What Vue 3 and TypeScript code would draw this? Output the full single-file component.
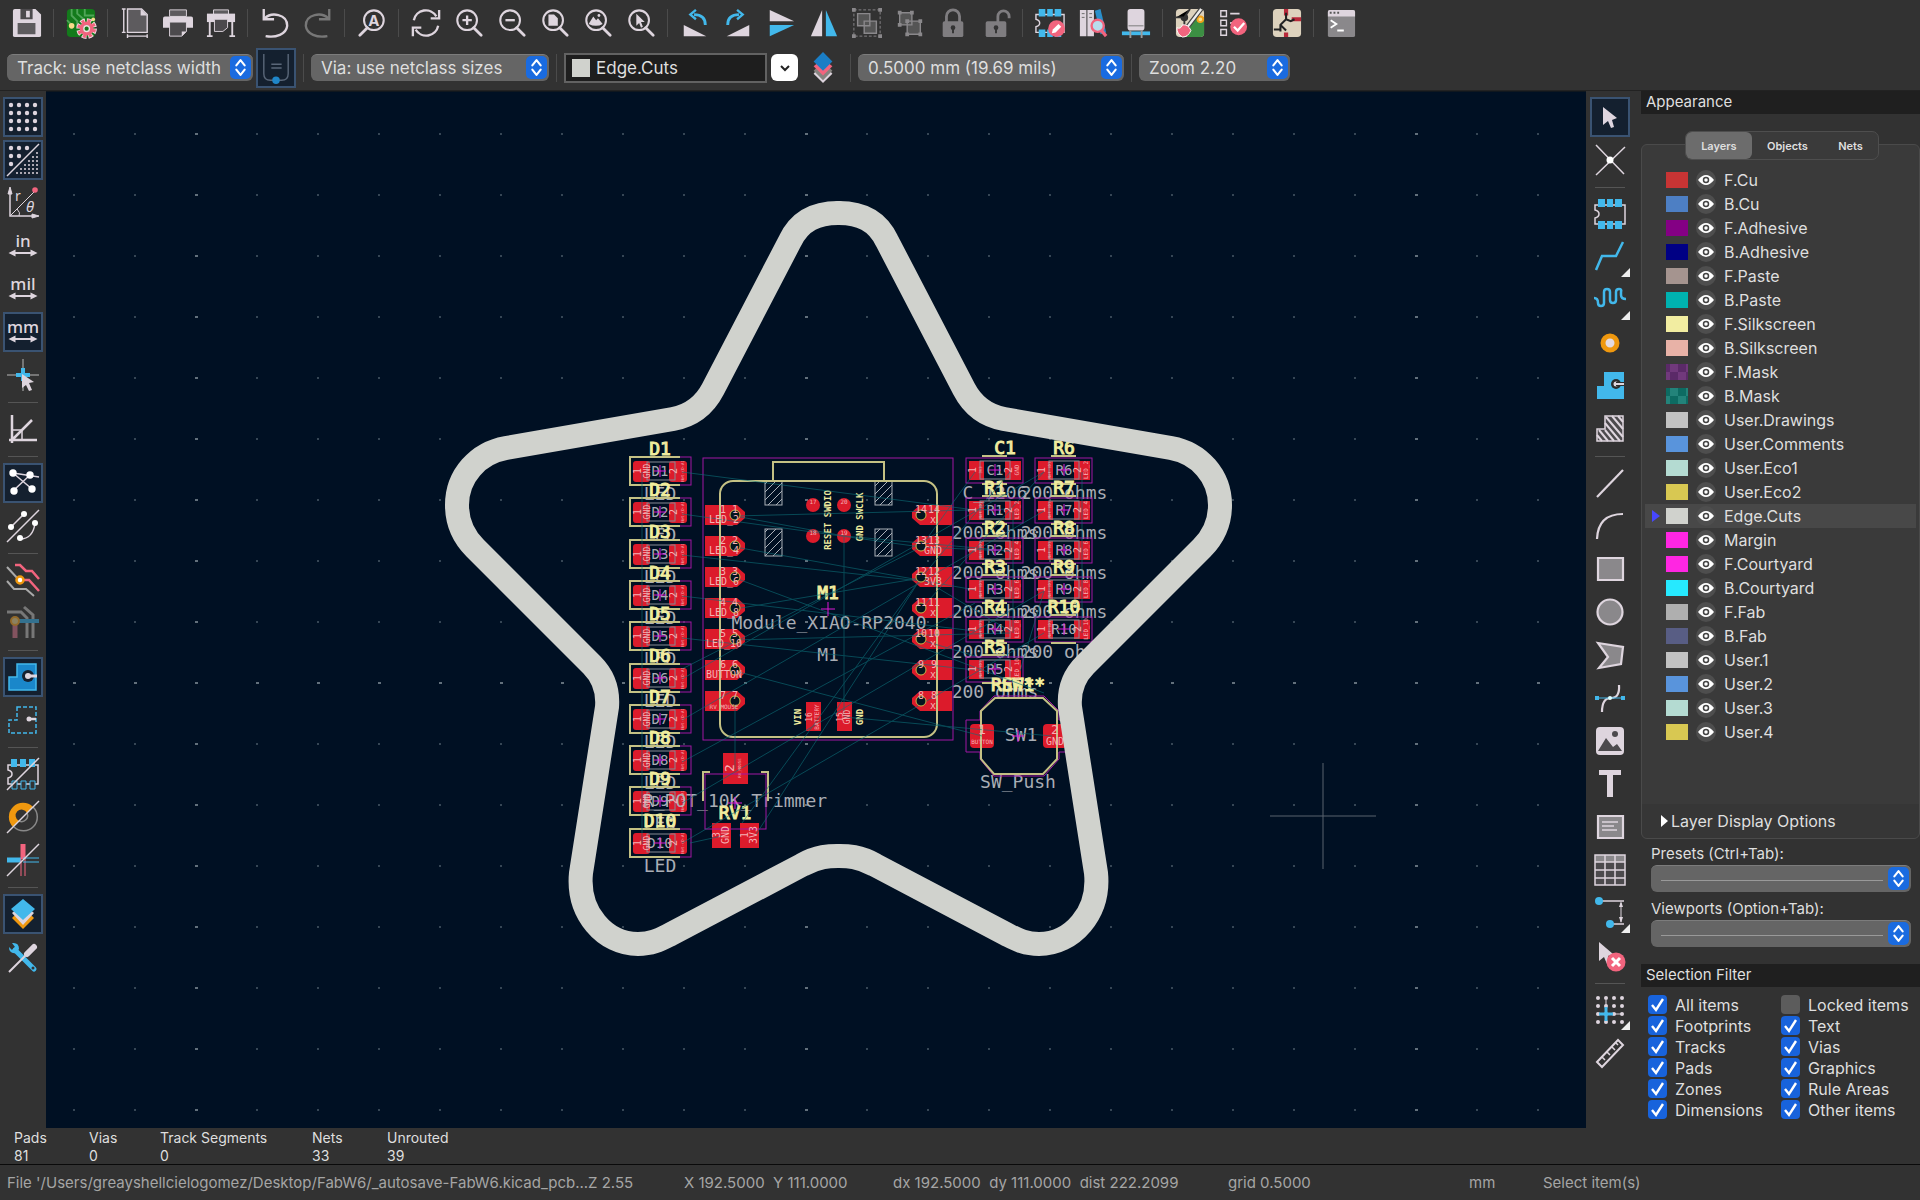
<script setup lang="ts">
import { ref } from 'vue'

interface Tool { id: string; label: string; on?: boolean; off?: boolean; more?: boolean }
type Item = Tool | null

const W = '#ded5de'
const B = '#42b8eb'
const P = '#f2647e'
const G = '#8a888b'

const lens = (inner: string) =>
  `<circle cx="14" cy="13" r="10.5" fill="none" stroke="${W}" stroke-width="2.2"/><path d="M21 21l8 8" stroke="${W}" stroke-width="3" stroke-linecap="round"/>${inner}`
const arrows = `<path d="M5 23h22" stroke="${W}" stroke-width="2"/><path d="M1.500 23l7-3.500v7zM30.500 23l-7-3.500v7z" fill="${W}"/>`
const unit = (t: string) => `<text x="16" y="17" text-anchor="middle" font-family="Noto Sans, sans-serif" font-weight="500" font-size="17" fill="${W}">${t}</text>${arrows}`
const range = (n: number) => Array.from({ length: n }, (_, i) => i)
const dots = (xs: number[], ys: number[], r: number) =>
  ys.map(y => xs.map(x => `<circle cx="${x}" cy="${y}" r="${r}" fill="${W}"/>`).join('')).join('')
const chip = `<path d="M1 7h30v19H1v-6q4-1 4-4t-4-4z" fill="none" stroke="${W}" stroke-width="1.500"/>`
const chipPads = `<path d="M4 1h7v8H4zM13 1h6v8h-6zM21 1h7v8h-7zM4 23h7v8H4zM13 23h6v8h-6zM21 23h7v8h-7z" fill="${B}"/>`
const lock = (d: string) => `<rect x="5" y="14" width="22" height="17" rx="2" fill="#7f7d80"/><path d="${d}" fill="none" stroke="#7f7d80" stroke-width="3"/><circle cx="16" cy="21" r="2.500" fill="#333"/><path d="M16 21v6" stroke="#333" stroke-width="2"/>`

const icons: Record<string, string> = {
  save: `<path d="M1 3q0-2 2-2h22l6 6v22q0 2-2 2H3q-2 0-2-2z" fill="${W}"/><path d="M9 1h13v11H9z" fill="#4c4a4d"/><path d="M15 3h4v7h-4z" fill="${W}"/><path d="M6 16h19v12H6z" fill="#5d5b5e"/>`,
  setup: `<rect x="1" y="1" width="30" height="30" rx="4" fill="#137a1b"/><path d="M6 1v7l6 6v6M12 1v5l7 6M20 1v7h10M1 13l5 5" stroke="#4fa457" stroke-width="2" fill="none"/><circle cx="6" cy="19" r="3" fill="#f6dc8a"/><circle cx="29" cy="12" r="2" fill="#f6dc8a"/><circle cx="22" cy="22" r="8" fill="none" stroke="#f3dfe3" stroke-width="6" stroke-dasharray="4.500 1.780"/><circle cx="22" cy="22" r="8" fill="none" stroke="${P}" stroke-width="4" stroke-dasharray="3 3.280" stroke-dashoffset="-.7"/><circle cx="22" cy="22" r="5.500" fill="none" stroke="${P}" stroke-width="4"/><circle cx="22" cy="22" r="3" fill="#137a1b" stroke="#f3dfe3" stroke-width="1.500"/>`,
  page: `<path d="M8 1h15l6 6v19H8z" fill="#5d5b5e" stroke="${W}" stroke-width="1.500"/><path d="M22 1v7h7z" fill="${W}"/><path d="M4 1v25M2 1h4M2 26h4M8 30h21M8 28v4M29 28v4" stroke="${W}" stroke-width="1.500"/>`,
  print: `<path d="M7 2h18v7H7z" fill="#5d5b5e" stroke="${W}"/><path d="M2 9h28q2 0 2 2v10H0V11q0-2 2-2z" fill="${W}"/><path d="M7 15h18v10l-5 5H7z" fill="#4c4a4d" stroke="${W}"/><path d="M25 25h-5v5z" fill="${W}"/>`,
  plot: `<path d="M8 2h16v5H8z" fill="#5d5b5e" stroke="${W}"/><path d="M1 6h30v9H1z" fill="${W}"/><path d="M9 12h14v9l-5 4H9z" fill="#4c4a4d" stroke="${W}"/><path d="M4 15v14M28 15v14M1 30h6M25 30h6" stroke="${W}" stroke-width="2"/>`,
  undo: `<path d="M5 11C12 4 29 6 29 19C28 28 17 32 6 30" fill="none" stroke="${W}" stroke-width="2.500"/><path d="M4 1v11h11" fill="none" stroke="${W}" stroke-width="2.500"/>`,
  redo: `<path d="M27 11C20 4 3 6 3 19C4 28 15 32 26 30" fill="none" stroke="#777" stroke-width="2.500"/><path d="M28 1v11H17" fill="none" stroke="#777" stroke-width="2.500"/>`,
  find: `<circle cx="18" cy="13" r="10.500" fill="none" stroke="${W}" stroke-width="2.200"/><path d="M11 21l-8 8" stroke="${W}" stroke-width="3" stroke-linecap="round"/><text x="18" y="19" text-anchor="middle" font-family="Inter, sans-serif" font-weight="700" font-size="16" fill="${W}">A</text>`,
  refresh: `<path d="M3 13A13 13 0 0 1 27 9M29 19A13 13 0 0 1 5 23" fill="none" stroke="${W}" stroke-width="2.500"/><path d="M30 2v9h-9M2 30v-9h9" fill="none" stroke="${W}" stroke-width="2.500"/>`,
  zoomin: lens(`<path d="M14 8v10M9 13h10" stroke="${W}" stroke-width="2.500"/>`),
  zoomout: lens(`<path d="M9 13h10" stroke="${W}" stroke-width="2.500"/>`),
  zoompage: lens(`<path d="M9 7h6l4 4v8H9z" fill="${W}"/>`),
  zoomobj: lens(`<path d="M6 17l5-8 3 4 2-2 5 6q-7 4-15 0z" fill="${W}"/><circle cx="17" cy="8" r="1.500" fill="${W}"/>`),
  zoomsel: lens(`<path d="M11 6v13l3-3 2 5 2-1-2-5h4z" fill="${W}"/>`),
  rotl: `<path d="M4 18v12h24z" fill="${W}"/><path d="M27 18q0-11-12-11" fill="none" stroke="${B}" stroke-width="3"/><path d="M17 2l-6 5 6 5" fill="none" stroke="${B}" stroke-width="2.500"/>`,
  rotr: `<path d="M28 18v12H4z" fill="${W}"/><path d="M5 18Q5 7 17 7" fill="none" stroke="${B}" stroke-width="3"/><path d="M15 2l6 5-6 5" fill="none" stroke="${B}" stroke-width="2.500"/>`,
  mirv: `<path d="M4 2v12h26z" fill="${W}"/><path d="M4 30V18h26z" fill="${B}"/>`,
  mirh: `<path d="M14 2v28H2z" fill="${W}"/><path d="M18 2v28h12z" fill="${B}"/>`,
  group: `<rect x="2" y="2" width="28" height="28" fill="none" stroke="${G}" stroke-dasharray="3 2"/><path d="M0 0h4v4H0zM28 0h4v4h-4zM0 28h4v4H0zM28 28h4v4h-4z" fill="${G}"/><path d="M6 6h13v13H6zM13 14h13v13H13z" fill="#555" stroke="${G}" stroke-width="1.500"/>`,
  ungroup: `<path d="M5 5h13v13H5zM13 14h14v14H13z" fill="#555" stroke="${G}" stroke-width="1.500"/><path d="M3 3h4v4H3zM16 3h4v4h-4zM3 16h4v4H3zM11 12h4v4h-4zM25 12h4v4h-4zM11 26h4v4h-4zM25 26h4v4h-4z" fill="${G}"/>`,
  lock: lock('M9 15V9a7 7 0 0 1 14 0v6'),
  unlock: lock('M18 15V9a6 6 0 0 1 12 0v2'),
  fpedit: `${chip}${chipPads}<circle cx="23" cy="22" r="9" fill="${P}"/><path d="M18 27l1-4 6-6 3 3-6 6z" fill="#fff"/>`,
  lib: `<path d="M2 2h7v28H2zM10 2h7v28h-7z" fill="${W}"/><path d="M18 3l6-2 6 25-6 2z" fill="#2a8fca"/><path d="M4 6h3M12 6h3M4 10h3M12 10h3" stroke="#666"/><circle cx="21" cy="19" r="6.500" fill="#b9dced" stroke="${P}" stroke-width="2.500"/><path d="M25 24l5 6" stroke="${P}" stroke-width="3.500"/>`,
  view3d: `<rect x="7" y="1" width="18" height="23" rx="3" fill="${W}"/><path d="M8 19h16" stroke="#777"/><path d="M1 25h30v4H1z" fill="${B}"/><path d="M10 24v8M22 24v8" stroke="#999" stroke-width="2"/>`,
  update: `<rect x="1" y="1" width="30" height="30" rx="4" fill="#ddd2bd"/><path d="M20 10h11v17q0 4-4 4H12z" fill="#3c8f43"/><circle cx="10" cy="10" r="4" fill="#333"/><path d="M1 10h9l6-9M10 10v8" stroke="#333" stroke-width="2"/><circle cx="27" cy="12" r="3" fill="#f5e08a" stroke="#f3a21b" stroke-width="2"/><path d="M28 1L12 22" stroke="#444" stroke-width="5"/><path d="M28 1L12 22" stroke="#eee" stroke-width="2.500"/><path d="M2 21q4 2 6-3 6-1 9 6-3 7-9 7-6-3-6-10z" fill="${P}" stroke="#fff"/>`,
  drc: `<path d="M3 3h6v6H3zM3 13h6v6H3zM3 23h6v6H3z" fill="none" stroke="${W}" stroke-width="1.500"/><path d="M13 6h10M13 16h6" stroke="${W}" stroke-width="2"/><circle cx="22" cy="20" r="9" fill="${P}"/><path d="M17 20l4 4 7-8" fill="none" stroke="#fff" stroke-width="2.500"/>`,
  schem: `<rect x="1" y="1" width="30" height="30" rx="4" fill="#ddd2bd"/><path d="M15 1v7M21 12h10M15 26v5" stroke="#b8283a" stroke-width="4.500"/><path d="M15 5v7l5 2 4-2M15 12l-6 6v7M2 23h8M9 18l6 6" stroke="#222" stroke-width="2.200" fill="none"/>`,
  console: `<rect x="2" y="2" width="29" height="29" rx="2" fill="${G}"/><path d="M2 9h29V4q0-2-2-2H4Q2 2 2 4z" fill="${W}"/><path d="M4 5h2M8 5h2M12 5h2" stroke="#555" stroke-width="2"/><path d="M5 13l6 4-6 4M12 24h7" fill="none" stroke="#fff" stroke-width="2"/>`,
  trackw: `<path d="M3 1v21q0 7 7 7h12q7 0 7-7V1M11 12h11M11 16h11" fill="none" stroke="#5a6779" stroke-width="1.500"/><circle cx="16" cy="29" r="4" fill="#1f86c9"/>`,
  layers: `<path d="M16 10L6 22l10 10 10-10z" fill="${W}"/><path d="M16 9L6 19l10 10 10-10z" fill="#85837f"/><path d="M16 6L6 14l10 10 10-10z" fill="${P}"/><path d="M16-1L6 9l10 10L26 9z" fill="#1a7ec6"/>`,
  grid: dots([4, 12, 20, 28], [4, 12, 20, 28], 2.2),
  gridov: `${dots([4, 12, 20], [4], 2.2)}${dots([4, 12], [12], 2.2)}${dots([4], [20], 2.2)}<path d="M0 32L32 0" stroke="${W}" stroke-width="1.500"/>` +
    range(6).map(r => dots(range(r + 1).map(i => 30 - i * 4), [9 + r * 4], 1)).join(''),
  polar: `<path d="M3 4v25h26" fill="none" stroke="${W}" stroke-width="1.500"/><path d="M3 0l-2 7h4zM32 29l-7-2v4zM3 29L28 4" fill="${W}" stroke="${W}"/><path d="M10 22q4 4 2 7" fill="none" stroke="${W}"/><circle cx="28" cy="3" r="2.800" fill="${P}"/><text x="8" y="14" font-family="Noto Sans, sans-serif" font-size="14" fill="${W}">r</text><text x="19" y="25" font-family="Noto Sans, sans-serif" font-style="italic" font-size="15" fill="${W}">θ</text>`,
  inch: unit('in'), mil: unit('mil'), mm: unit('mm'),
  cross: `<path d="M16 0v32M0 16h32" stroke="#8c8c8c" stroke-width="1.500"/><path d="M16 9v13M9 16h14" stroke="${B}" stroke-width="4"/><path d="M15 15v14l4-3 3 6 3-1-3-7 5-1z" fill="${W}"/>`,
  angle: `<path d="M5 2v28M2 27h28M4 28L25 7" stroke="${W}" stroke-width="2.500"/><path d="M5 17h10v9" fill="none" stroke="${W}" stroke-width="1.500"/>`,
  rats: `<path d="M6 6l26 4M7 23L23 8M6 6l19 16" stroke="${W}" stroke-width="1.500"/><circle cx="6" cy="6" r="3.700" fill="#fff"/><circle cx="23" cy="8" r="3.700" fill="#fff"/><circle cx="7" cy="24" r="3.700" fill="#fff"/><circle cx="25" cy="22" r="3.700" fill="#fff"/>`,
  ratscurve: `<path d="M0 32L32 0M4 17L17 4M13 29q13 0 15-16" fill="none" stroke="${W}" stroke-width="1.500"/><circle cx="4" cy="17" r="3" fill="#fff"/><circle cx="17" cy="4" r="3" fill="#fff"/><circle cx="28" cy="13" r="3" fill="#fff"/><circle cx="13" cy="28" r="3" fill="#fff"/>`,
  netclr: `<path d="M0 3l12 13M0 17l7 8h12l8 7" fill="none" stroke="#aaa" stroke-width="2"/><path d="M8 1h5l6 6h6l7 8M13 16h9l10 11" fill="none" stroke="${P}" stroke-width="2.500"/><circle cx="13" cy="16" r="3.500" fill="#fff" stroke="#ef980f" stroke-width="2.500"/>`,
  contrast: `<path d="M0 5h14l6 6v20M17 0l9 8v23" fill="none" stroke="#777" stroke-width="3"/><path d="M8 15v16" stroke="#83535f" stroke-width="5"/><path d="M8 14h24" stroke="#33718f" stroke-width="4"/><circle cx="8" cy="14" r="4" fill="#8c8160" stroke="#936a2b" stroke-width="2"/>`,
  zonefill: `<path d="M10 3h19v26H2V16h8z" fill="#1a87ca" stroke="${B}" stroke-width="1.500"/><circle cx="21" cy="15" r="6" fill="#15202f"/><circle cx="21" cy="15" r="3" fill="${W}"/><path d="M21 15h9" stroke="${W}" stroke-width="3"/>`,
  zoneout: `<path d="M10 3h19v26H2V16h8z" fill="none" stroke="${B}" stroke-width="1.500" stroke-dasharray="4 2"/><circle cx="22" cy="15" r="2.500" fill="${W}"/><path d="M22 15h7" stroke="${W}" stroke-width="2.500"/>`,
  padsk: `${chip}<path d="M4 1h6v8H4zM13 1h6v8h-6zM22 1h6v8h-6z" fill="${B}"/><path d="M5 23h5v8H5zM14 23h5v8h-5zM23 23h5v8h-5z" fill="#333" stroke="${B}"/><path d="M0 32L32 0" stroke="${W}" stroke-width="1.500"/>`,
  viask: `<path d="M6 26A13 13 0 1 1 26 6L20 12a6 6 0 1 0-8 8z" fill="#ef980f"/><path d="M26 6A13 13 0 0 1 7 26M20 12a6 6 0 0 1-8 8" fill="none" stroke="#888" stroke-width="1.500"/><path d="M0 32L32 0" stroke="${W}" stroke-width="1.500"/>`,
  tracksk: `<path d="M16 0v15" stroke="${P}" stroke-width="5"/><path d="M0 16h14" stroke="${B}" stroke-width="5"/><path d="M14 14v18M18 14v18" stroke="${P}"/><path d="M16 14h16M16 18h16" stroke="${B}"/><path d="M0 32L32 0" stroke="${W}" stroke-width="1.500"/>`,
  appear: `<path d="M16 9L5 20l11 11 11-11z" fill="#ef980f"/><path d="M16 6L5 15l11 12 11-12z" fill="${W}"/><path d="M16 1L4 11l12 11 12-11z" fill="${B}"/>`,
  props: `<path d="M27 28L8 9" stroke="${B}" stroke-width="5" stroke-linecap="round"/><path d="M2 6q0 7 7 6l3-4q0-7-7-6l3 4-3 3z" fill="${B}"/><circle cx="26" cy="27" r="1.500" fill="#333"/><path d="M2 31l19-19" stroke="${W}" stroke-width="2"/><path d="M20 13l7-7" stroke="${W}" stroke-width="6" stroke-linecap="round"/>`,
  select: `<path d="M9 6v18l5-4 3 7 3-1-2-7 5-2z" fill="${W}"/>`,
  local: `<path d="M2 1l28 29M31 3L2 31" stroke="${W}" stroke-width="1.500"/><circle cx="16" cy="16" r="3.500" fill="#fff"/>`,
  fp: chip + chipPads,
  route: `<path d="M2 29l6-14h14l7-14" fill="none" stroke="${B}" stroke-width="2.500"/>`,
  tune: `<path d="M0 14q4 0 4 5 0 3 3 3t3-3V8q0-3 3-3t3 3v8q0 3 3 3t3-3V8q0-3 3-3t2 3v3q0 4 5 4" fill="none" stroke="${B}" stroke-width="2.500"/>`,
  via: `<circle cx="16" cy="16" r="7" fill="#e3dbe2" stroke="#ef980f" stroke-width="5"/>`,
  zone: `<path d="M10 2h20v27H3V16h7z" fill="${B}"/><circle cx="22" cy="14" r="5" fill="#2c2c2c"/><circle cx="22" cy="14" r="2.500" fill="${W}"/><path d="M22 14h8" stroke="#2c2c2c" stroke-width="4"/><path d="M22 14h8" stroke="${W}" stroke-width="2"/>`,
  rule: `<path d="M11 3h18v25H3V16h8z" fill="#4c4a4d" stroke="${W}" stroke-width="1.500"/><path d="M12 4l17 20M18 3l11 13M24 3l5 6M11 10l15 18M11 17l9 11M5 17l9 11M3 22l5 6" stroke="${W}" stroke-width="2"/>`,
  line: `<path d="M3 30L29 3" stroke="${W}" stroke-width="2.200"/>`,
  arc: `<path d="M3 29Q4 4 29 4" fill="none" stroke="${W}" stroke-width="2.200"/>`,
  rect: `<path d="M4 5h25v22H4z" fill="${G}" stroke="${W}" stroke-width="2.200"/>`,
  circle: `<circle cx="16" cy="16" r="12.500" fill="${G}" stroke="${W}" stroke-width="2.200"/>`,
  poly: `<path d="M4 4l25 4-2 17-22 4 9-11z" fill="${G}" stroke="${W}" stroke-width="2.200"/>`,
  bezier: `<path d="M8 30q0-14 9-14t8-13" fill="none" stroke="${W}" stroke-width="2.200"/><path d="M3 16h26" stroke="${B}"/><path d="M1 14h4v4H1zM27 14h4v4h-4z" fill="${B}"/><circle cx="16" cy="16" r="2" fill="#dff"/>`,
  image: `<rect x="2" y="2" width="28" height="28" rx="4" fill="${W}"/><circle cx="21" cy="9" r="3" fill="#4c4a4d"/><path d="M4 26l8-13 7 9 4-3 5 7z" fill="#4c4a4d"/>`,
  text: `<path d="M5 2h22v5h-8v22h-6V7H5z" fill="${W}"/>`,
  textbox: `<path d="M4 5h25v22H4z" fill="${G}" stroke="${W}" stroke-width="2.200"/><path d="M8 11h16M8 15h12M8 19h15" stroke="${W}" stroke-width="1.500"/>`,
  table: `<path d="M1 1h30v30H1z" fill="#4c4a4d"/><path d="M1 1h30v7H1z" fill="${G}"/><path d="M1 1h30v30H1zM1 8h30M1 16h30M1 24h30M11 1v30M21 1v30" fill="none" stroke="${W}" stroke-width="1.500"/>`,
  dim: `<path d="M5 4h25M16 27h14" stroke="${W}" stroke-width="1.500"/><path d="M27 6v19" stroke="${W}"/><path d="M27 4l-2 6h4zM27 26l-2-6h4z" fill="${W}"/><circle cx="5" cy="4" r="4" fill="${B}"/><circle cx="16" cy="27" r="4" fill="${B}"/>`,
  del: `<path d="M5 2v19l5-4 3 7 4-2-3-6 5-2z" fill="${W}"/><circle cx="22" cy="22" r="9.500" fill="${P}"/><path d="M18 18l8 8M26 18l-8 8" stroke="#fff" stroke-width="3"/>`,
  origin: `${dots([4, 12, 20, 28], [4, 12, 20, 28], 2)}<path d="M12 13v14M5 20h14" stroke="${B}" stroke-width="3"/><path d="M19 20h10M12 6v6" stroke="${W}"/>`,
  measure: `<path d="M3 25L24 3l5 5L8 30z" fill="none" stroke="${W}" stroke-width="2"/><path d="M8 20l3 3M13 15l3 3M18 10l3 3M22 6l2 2" stroke="${W}" stroke-width="1.500"/>`
}

const t = (id: string, label: string, extra: Partial<Tool> = {}): Tool => ({ id, label, ...extra })
const topTools: Item[] = [
  t('save', 'Save'), null, t('setup', 'Board setup'), null, t('page', 'Page settings'), t('print', 'Print'), t('plot', 'Plot'), null,
  t('undo', 'Undo'), t('redo', 'Redo'), null, t('find', 'Find'), null, t('refresh', 'Refresh'), t('zoomin', 'Zoom in'), t('zoomout', 'Zoom out'),
  t('zoompage', 'Zoom to page'), t('zoomobj', 'Zoom to objects'), t('zoomsel', 'Zoom to selection'), null,
  t('rotl', 'Rotate left'), t('rotr', 'Rotate right'), t('mirv', 'Mirror vertically'), t('mirh', 'Mirror horizontally'), t('group', 'Group'),
  t('ungroup', 'Ungroup'), t('lock', 'Lock'), t('unlock', 'Unlock'), null,
  t('fpedit', 'Footprint editor'), t('lib', 'Footprint browser'), t('view3d', '3D viewer'), null,
  t('update', 'Update from schematic'), t('drc', 'Design rules'), null, t('schem', 'Schematic editor'), null, t('console', 'Console')
]
const leftTools: Item[] = [
  t('grid', 'Grid', { on: true }), t('gridov', 'Grid overrides', { on: true }), t('polar', 'Polar'), t('inch', 'Inches'), t('mil', 'Mils'),
  t('mm', 'Millimetres', { on: true }), t('cross', 'Full cursor'), null, t('angle', '45 degrees'), null,
  t('rats', 'Ratsnest', { on: true }), t('ratscurve', 'Curved ratsnest'), null, t('netclr', 'Net colours'), t('contrast', 'Contrast'), null,
  t('zonefill', 'Filled zones', { on: true }), t('zoneout', 'Zone outlines'), null, t('padsk', 'Pad outlines'), t('viask', 'Via outlines'),
  t('tracksk', 'Track outlines'), null, t('appear', 'Appearance manager', { on: true }), t('props', 'Properties')
]
const rightTools: Item[] = [
  t('select', 'Select', { on: true }), t('local', 'Local ratsnest'), null, t('fp', 'Place footprint'), t('route', 'Route', { more: true }),
  t('tune', 'Tune length', { more: true }), t('via', 'Via'), t('zone', 'Zone'), t('rule', 'Rule area'), null, t('line', 'Line'), t('arc', 'Arc'),
  t('rect', 'Rectangle'), t('circle', 'Circle'), t('poly', 'Polygon'), t('bezier', 'Bezier'), t('image', 'Image'), t('text', 'Text'),
  t('textbox', 'Text box'), t('table', 'Table'), t('dim', 'Dimension', { more: true }), t('del', 'Delete'), null,
  t('origin', 'Grid origin', { more: true }), t('measure', 'Measure')
]

const layers = [
  ['F.Cu', '#c83434'], ['B.Cu', '#4d7fc4'], ['F.Adhesive', '#840084'], ['B.Adhesive', '#000084'], ['F.Paste', '#a5948f'],
  ['B.Paste', '#00b2b0'], ['F.Silkscreen', '#f2eda1'], ['B.Silkscreen', '#e8b2a7'], ['F.Mask', '#5b2a68', '#71397c'],
  ['B.Mask', '#0d6b62', '#23837a'], ['User.Drawings', '#c2c2c2'], ['User.Comments', '#5994dc'], ['User.Eco1', '#b4dbd2'],
  ['User.Eco2', '#d8c852'], ['Edge.Cuts', '#d0d2cd'], ['Margin', '#ff26e2'], ['F.Courtyard', '#ff26e2'], ['B.Courtyard', '#26e9ff'],
  ['F.Fab', '#afafaf'], ['B.Fab', '#585d84'], ['User.1', '#c2c2c2'], ['User.2', '#5994dc'], ['User.3', '#b4dbd2'], ['User.4', '#d8c852']
]
const tab = ref('Layers')
const active = ref('Edge.Cuts')
const filters = ref([
  { name: 'All items', on: true }, { name: 'Locked items', on: false }, { name: 'Footprints', on: true }, { name: 'Text', on: true },
  { name: 'Tracks', on: true }, { name: 'Vias', on: true }, { name: 'Pads', on: true }, { name: 'Graphics', on: true },
  { name: 'Zones', on: true }, { name: 'Rule Areas', on: true }, { name: 'Dimensions', on: true }, { name: 'Other items', on: true }
])
const stats = [['Pads', '81'], ['Vias', '0'], ['Track Segments', '0'], ['Nets', '33'], ['Unrouted', '39']]

// Board geometry, in canvas units
const gridDots = range(17).flatMap(r => range(25).map(c => ({ x: 74 + c * 61, y: 133 + r * 61, major: c % 10 === 2 || r === 9 })))
const leds = range(10).map(i => ({ name: `D${i + 1}`, y: 470 + Math.round(i * 41.3) }))
const leftPads = ['LED_2', 'LED_4', 'LED_6', 'LED_8', 'LED_10', 'BUTTON', 'RV_MOUSE'].map((net, i) => ({ n: i + 1, net, y: 514 + i * 31 }))
const rightPads = ['x', 'GND', '3V3', 'x', 'x', 'x', 'x'].map((net, i) => ({ n: 14 - i, net, y: 514 + i * 31 }))
const rowY = (i: number) => 469 + Math.round(i * 39.8)
const smd = [
  ...['C1', 'R1', 'R2', 'R3', 'R4', 'R5'].map((name, i) => ({ name, x: 995, y: rowY(i), val: i ? '200 ohms' : 'C_1206', a: i ? 'Net-(D)' : '3V3', b: i ? `LED_${i * 2}` : 'GND', rx: i ? 0 : 10 })),
  ...['R6', 'R7', 'R8', 'R9', 'R10'].map((name, i) => ({ name, x: 1064, y: rowY(i), val: '200 ohms', a: 'Net-(D)', b: `LED_${i * 2 + 2}`, rx: 0 }))
]
const hatches = [[765, 480, 24], [875, 480, 24], [765, 528, 27], [875, 528, 27]]
const testPads = [[813, 504, '17'], [844, 504, '20'], [813, 535, '18'], [844, 535, '19']]
const rats = [
  [642, 471, 642, 843], [844, 535, 844, 715], [735, 701, 735, 768], [682, 471, 975, 509], [735, 515, 1010, 508], [682, 513, 921, 546],
  [735, 546, 975, 589], [682, 554, 921, 580], [735, 577, 1044, 692], [682, 595, 975, 630], [735, 608, 921, 577], [682, 637, 975, 669],
  [735, 639, 1010, 632], [735, 670, 982, 735], [844, 716, 1052, 735], [682, 678, 1044, 471], [682, 719, 1044, 510], [682, 761, 975, 602],
  [682, 802, 1044, 590], [682, 842, 1044, 632], [921, 577, 755, 835], [921, 577, 742, 822], [921, 546, 975, 471], [921, 577, 1010, 471],
  [735, 515, 844, 535], [921, 546, 682, 668], [921, 639, 975, 655], [921, 608, 1044, 471], [690, 842, 722, 835], [1013, 510, 1013, 632],
  [1082, 471, 1082, 632], [1020, 670, 1044, 590], [844, 535, 1010, 550], [921, 546, 1010, 550], [921, 577, 1010, 630]
]
const half = 'M838 212C817 212 800 219 790 240L713 388Q700 413 673 418L506 447C478 452 457 475 457 504C457 522 463 535 475 547L592 664Q609 681 607 706L581 872C577 912 605 943 638 943C653 943 661 938 671 933L802 864C818 855 830 855 838 855'
</script>

<template>
  <div class="app">
    <header class="bar top">
      <template v-for="(tool, i) in topTools" :key="i">
        <button v-if="tool" class="tool" :aria-label="tool.label"><svg viewBox="0 0 32 32" v-html="icons[tool.id]" /></button>
        <i v-else class="vsep" />
      </template>
    </header>
    <div class="bar opts">
      <span class="pick track"><select aria-label="Track width"><option>Track: use netclass width</option></select><svg class="step" viewBox="0 0 20 22"><path d="M6 9l4-5 4 5M6 13l4 5 4-5" /></svg></span>
      <button class="tool sq on" aria-label="Use existing track width"><svg viewBox="0 0 32 32" v-html="icons.trackw" /></button>
      <i class="vsep" />
      <span class="pick via"><select aria-label="Via size"><option>Via: use netclass sizes</option></select><svg class="step" viewBox="0 0 20 22"><path d="M6 9l4-5 4 5M6 13l4 5 4-5" /></svg></span>
      <i class="vsep" />
      <span class="layerbox"><i class="chip" /><input value="Edge.Cuts" aria-label="Active layer" readonly></span>
      <button class="drop" aria-label="Choose layer"><svg viewBox="0 0 12 12"><path d="M2 4l4 4 4-4" /></svg></button>
      <button class="tool" aria-label="Layer pair"><svg viewBox="0 0 32 32" v-html="icons.layers" /></button>
      <i class="vsep" />
      <span class="pick gridsel"><select aria-label="Grid"><option>0.5000 mm (19.69 mils)</option></select><svg class="step" viewBox="0 0 20 22"><path d="M6 9l4-5 4 5M6 13l4 5 4-5" /></svg></span>
      <i class="vsep" />
      <span class="pick zoom"><select aria-label="Zoom"><option>Zoom 2.20</option></select><svg class="step" viewBox="0 0 20 22"><path d="M6 9l4-5 4 5M6 13l4 5 4-5" /></svg></span>
    </div>

    <main class="work">
      <nav class="side left">
        <template v-for="(tool, i) in leftTools" :key="i">
          <button v-if="tool" class="tool sq" :class="{ on: tool.on }" :aria-label="tool.label"><svg viewBox="0 0 32 32" v-html="icons[tool.id]" /></button>
          <i v-else class="hsep" />
        </template>
      </nav>

      <svg class="board" viewBox="46 91 1540 1036" preserveAspectRatio="xMidYMid slice">
        <defs>
          <pattern id="hatch" width="8" height="8" patternUnits="userSpaceOnUse"><path d="M0 8L8 0" stroke="#aab0b8" stroke-width="1" /></pattern>
        </defs>
        <rect v-for="(d, i) in gridDots" :key="i" :x="d.x - 1" :y="d.y - 1" :width="d.major ? 3 : 2" height="2" :fill="d.major ? '#62707c' : '#364655'" />

        <g class="pads">
          <g v-for="d in leds" :key="d.name">
            <rect x="633" :y="d.y - 10" width="17" height="21" rx="3" /><rect x="669" :y="d.y - 10" width="18" height="21" rx="3" />
          </g>
          <g v-for="p in leftPads" :key="p.n"><path :d="`M705 ${p.y - 10}h32l8 7v6l-8 7h-32z`" /></g>
          <g v-for="p in rightPads" :key="p.n"><path :d="`M952 ${p.y - 10}h-32l-8 7v6l8 7h32z`" /></g>
          <circle v-for="p in testPads" :key="p[2]" :cx="p[0]" :cy="p[1]" r="7" />
          <rect x="806" y="701" width="15" height="29" /><rect x="837" y="701" width="15" height="29" />
          <rect x="723" y="752" width="25" height="31" /><rect x="712" y="822" width="19" height="25" /><rect x="740" y="822" width="19" height="25" />
          <g v-for="s in smd" :key="s.name"><rect :x="s.x - 26" :y="s.y - 9" width="15" height="19" /><rect :x="s.x + 10" :y="s.y - 9" width="16" height="19" /></g>
          <rect x="970" y="723" width="24" height="24" rx="4" /><rect x="1043" y="723" width="24" height="24" rx="4" />
        </g>

        <g class="fab">
          <g v-for="d in leds" :key="d.name">
            <rect x="647" :y="d.y - 9" width="28" height="18" />
            <text class="ref2" x="660" :y="d.y + 5">{{ d.name }}</text><text x="660" :y="d.y + 29">LED</text>
          </g>
          <g v-for="s in smd" :key="s.name">
            <rect :x="s.x - 15" :y="s.y - 9" width="30" height="18" />
            <text class="ref2" :x="s.x" :y="s.y + 5">{{ s.name }}</text><text :x="s.x" :y="s.y + 29">{{ s.val }}</text>
          </g>
          <text x="829" y="628">Module_XIAO-RP2040</text><text x="828" y="660">M1</text>
          <text x="735" y="806">R_POT_10K_Trimmer</text><text x="1021" y="740">SW1</text><text x="1018" y="787">SW_Push</text>
          <rect v-for="(h, i) in hatches" :key="i" :x="h[0]" :y="h[1]" width="17" :height="h[2]" class="hatched" />
        </g>

        <g class="court">
          <rect v-for="d in leds" :key="d.name" x="630" :y="d.y - 14" width="61" height="28" />
          <rect v-for="s in smd" :key="s.name" :x="s.x - 29" :y="s.y - 12" width="57" height="25" />
          <rect x="703" y="457" width="250" height="282" /><rect x="705" y="773" width="61" height="55" />
          <path d="M980 719h-14v32h14v7l14 17h50l15-17v-7h14v-32h-14v-9l-15-15h-50l-14 15z" />
        </g>
        <g class="silk">
          <path v-for="d in leds" :key="d.name" :d="`M680 ${d.y - 14}h-50v28h50`" />
          <path v-for="s in smd" :key="s.name" :d="`M${s.x - 13} ${s.y - 14}h25M${s.x - 13} ${s.y + 14}h25`" />
          <rect x="720" y="480" width="217" height="256" rx="13" /><path d="M773 480v-19h111v19M710 771h-7v29M761 771h7v29" />
          <path d="M995 697h48l14 13v48l-14 15h-49l-13-15v-48z" />
          <g class="ref">
            <text v-for="d in leds" :key="d.name" x="660" :y="d.y - 16">{{ d.name }}</text>
            <text v-for="s in smd" :key="s.name" :x="s.x + s.rx" :y="s.y - 16">{{ s.name }}</text>
            <text x="828" y="598">M1</text><text x="735" y="818">RV1</text><text x="1018" y="690">REF**</text><text x="1018" y="690">SW1</text>
          </g>
          <g class="tiny">
            <text transform="translate(831 519) rotate(-90)">RESET SWDIO</text><text transform="translate(863 516) rotate(-90)">GND  SWCLK</text>
            <text transform="translate(801 716) rotate(-90)">VIN</text><text transform="translate(863 716) rotate(-90)">GND</text>
          </g>
        </g>

        <g class="rats"><line v-for="(r, i) in rats" :key="i" :x1="r[0]" :y1="r[1]" :x2="r[2]" :y2="r[3]" /></g>

        <g class="holes">
          <circle v-for="p in leftPads" :key="p.n" cx="735" :cy="p.y" r="5" /><circle v-for="p in rightPads" :key="p.n" cx="921" :cy="p.y" r="5" />
        </g>
        <g class="nets">
          <g v-for="d in leds" :key="d.name">
            <text :transform="`translate(641 ${d.y}) rotate(-90)`">1</text><text class="s8" :transform="`translate(650 ${d.y}) rotate(-90)`">GND</text>
            <text :transform="`translate(677 ${d.y}) rotate(-90)`">2</text><text class="s4" :transform="`translate(684 ${d.y}) rotate(-90)`">Net-(D-A)</text>
          </g>
          <g v-for="p in leftPads" :key="p.n">
            <text x="723" :y="p.y - 2">{{ p.n }}</text><text x="735" :y="p.y - 2">{{ p.n }}</text><text x="724" :y="p.y + 8" :class="{ s6: p.n === 7 }">{{ p.net }}</text>
          </g>
          <g v-for="p in rightPads" :key="p.n">
            <text x="934" :y="p.y - 2">{{ p.n }}</text><text x="921" :y="p.y - 2">{{ p.n }}</text><text x="933" :y="p.y + 8">{{ p.net }}</text>
          </g>
          <text v-for="p in testPads" :key="p[2]" class="s6" :x="p[0]" :y="Number(p[1]) - 1">{{ p[2] }}</text>
          <text class="s8" transform="translate(812 716) rotate(-90)">16</text><text class="s6" transform="translate(819 716) rotate(-90)">BATTERY</text>
          <text class="s8" transform="translate(843 716) rotate(-90)">15</text><text class="s8" transform="translate(850 716) rotate(-90)">GND</text>
          <text class="s12" transform="translate(734 767) rotate(-90)">2</text><text class="s4" transform="translate(741 767) rotate(-90)">RV_MOUSE</text>
          <text transform="translate(720 834) rotate(-90)">3</text><text transform="translate(729 834) rotate(-90)">GND</text>
          <text transform="translate(748 834) rotate(-90)">1</text><text transform="translate(757 834) rotate(-90)">3V3</text>
          <g v-for="s in smd" :key="s.name">
            <text :transform="`translate(${s.x - 19} ${s.y}) rotate(-90)`">1</text><text class="s4" :transform="`translate(${s.x - 13} ${s.y}) rotate(-90)`">{{ s.a }}</text>
            <text :transform="`translate(${s.x + 17} ${s.y}) rotate(-90)`">2</text><text class="s6" :transform="`translate(${s.x + 24} ${s.y}) rotate(-90)`">{{ s.b }}</text>
          </g>
          <text class="s12" x="982" y="733">1</text><text class="s6" x="982" y="743">BUTTON</text><text class="s12" x="1055" y="733">2</text><text x="1055" y="744">GND</text>
        </g>

        <g class="anchors">
          <path v-for="d in leds" :key="d.name" :d="`M654 ${d.y}h12M660 ${d.y - 6}v12`" />
          <path v-for="s in smd" :key="s.name" :d="`M${s.x - 6} ${s.y}h12M${s.x} ${s.y - 6}v12`" />
          <path d="M821 608h14M828 601v14M728 802h14M735 796v12M1012 735h12M1018 729v12" />
        </g>

        <g class="edge"><path :d="half" /><path :d="half" transform="translate(1677 0) scale(-1 1)" /></g>
        <path class="cursor" d="M1270 815h106M1323 762v106" />
      </svg>

      <nav class="side right">
        <template v-for="(tool, i) in rightTools" :key="i">
          <button v-if="tool" class="tool sq" :class="{ on: tool.on, more: tool.more }" :aria-label="tool.label"><svg viewBox="0 0 32 32" v-html="icons[tool.id]" /></button>
          <i v-else class="hsep" />
        </template>
      </nav>

      <aside class="panel">
        <h2>Appearance</h2>
        <section class="box">
          <div class="tabs">
            <button v-for="n in ['Layers', 'Objects', 'Nets']" :key="n" :class="{ sel: tab === n }" @click="tab = n">{{ n }}</button>
          </div>
          <ul>
            <li v-for="l in layers" :key="l[0]" :class="{ cur: active === l[0] }" @click="active = l[0]">
              <i class="mark" />
              <i class="swatch" :class="{ check: l[2] }" :style="{ '--c': l[1], '--d': l[2] }" />
              <svg class="eye" viewBox="0 0 20 20"><circle cx="10" cy="10" r="10" fill="#4e4e4e" /><path d="M2 10q8-10 16 0q-8 10-16 0z" fill="#fff" /><circle cx="10" cy="10" r="2.500" fill="#fff" stroke="#444" stroke-width="1.500" /></svg>
              <span>{{ l[0] }}</span>
            </li>
          </ul>
          <button class="more-opts"><i />Layer Display Options</button>
        </section>
        <div class="combos">
          <label for="presets">Presets (Ctrl+Tab):</label>
          <span class="pick wide"><select id="presets"><option></option></select><svg class="step" viewBox="0 0 20 22"><path d="M6 9l4-5 4 5M6 13l4 5 4-5" /></svg></span>
          <label for="viewports">Viewports (Option+Tab):</label>
          <span class="pick wide"><select id="viewports"><option></option></select><svg class="step" viewBox="0 0 20 22"><path d="M6 9l4-5 4 5M6 13l4 5 4-5" /></svg></span>
        </div>
        <h2>Selection Filter</h2>
        <div class="filters">
          <label v-for="f in filters" :key="f.name"><input v-model="f.on" type="checkbox">{{ f.name }}</label>
        </div>
      </aside>
    </main>

    <dl class="stats"><div v-for="s in stats" :key="s[0]"><dt>{{ s[0] }}</dt><dd>{{ s[1] }}</dd></div></dl>
    <footer class="status">
      <span>File '/Users/greayshellcielogomez/Desktop/FabW6/_autosave-FabW6.kicad_pcb...</span><span>Z 2.55</span><span>X 192.5000&nbsp; Y 111.0000</span>
      <span>dx 192.5000&nbsp; dy 111.0000&nbsp; dist 222.2099</span><span>grid 0.5000</span><span>mm</span><span>Select item(s)</span>
    </footer>
  </div>
</template>

<style>
body { background: #323232; }
</style>

<style scoped>
.app { display: flex; flex-direction: column; min-height: 100vh; box-sizing: border-box; background: #323232; color: #dfdfdf; font: 15px/20px Inter, sans-serif; }
.app * { box-sizing: border-box; }
button, select, input { font: inherit; color: inherit; margin: 0; }
button { border: 0; padding: 0; background: none; }
svg { display: block; }
.bar { display: flex; align-items: center; flex: none; }
.top { height: 45px; padding-left: 5px; }
.top .tool { width: 43px; height: 40px; }
.tool { display: flex; align-items: center; justify-content: center; flex: none; }
.tool svg { width: 30px; height: 30px; overflow: visible; }
.vsep { width: 1px; height: 28px; margin: 0 5px; background: #4b4b4b; flex: none; }
.opts { height: 46px; padding-left: 7px; border-bottom: 1px solid #222; }
.opts .vsep { margin: 0 7px; }
.sq { width: 40px; height: 40px; position: relative; }
.sq svg { width: 32px; height: 32px; }
.on { background: #14202f; border: 2px solid #3a5372; }
.opts .sq { margin-left: 3px; }
.opts .sq svg { width: 30px; height: 30px; }
.pick { position: relative; display: flex; height: 27px; flex: none; }
.pick select { appearance: none; width: 100%; height: 100%; border: 0; border-top: 1px solid #7c7c7c; border-radius: 6px; background: #656565; padding: 0 30px 0 10px; font-size: 17px; line-height: 20px; }
.step { position: absolute; right: 2px; top: 2px; width: 21px; height: 23px; border-radius: 5px; background: #1a6be0; }
.step path { fill: none; stroke: #fff; stroke-width: 2; stroke-linecap: round; stroke-linejoin: round; }
.track { width: 246px; }
.via { width: 238px; }
.gridsel { width: 266px; }
.zoom { width: 151px; }
.layerbox { display: flex; align-items: center; gap: 6px; width: 203px; height: 30px; padding-left: 6px; background: #1e1e1e; border: 2px solid #626262; flex: none; }
.layerbox .chip { width: 18px; height: 18px; background: #d0d2cd; flex: none; }
.layerbox input { width: 100%; border: 0; padding: 0; background: none; font-size: 17px; outline: 0; }
.drop { width: 27px; height: 27px; margin: 0 4px; background: #fff; border-radius: 6px; display: flex; align-items: center; justify-content: center; }
.drop svg { width: 12px; height: 12px; }
.drop path { fill: none; stroke: #222; stroke-width: 2; }
.opts .drop + .tool { width: 41px; }
.work { flex: 1; display: flex; }
.side { display: flex; flex-direction: column; align-items: center; gap: 3px; padding-top: 6px; flex: none; }
.left { width: 46px; }
.right { width: 55px; padding-right: 8px; }
.hsep { width: 30px; height: 1px; margin: 4px 0 3px; background: #555; flex: none; }
.more::after { content: ""; position: absolute; right: 0; bottom: 0; border: solid transparent; border-width: 0 0 9px 9px; border-bottom-color: #eee; }
.board { flex: 1; min-width: 0; background: #001023; border-top: 1px solid #10171e; }
.pads { fill: #dc1b2b; }
.fab { fill: #a9adb5; text-anchor: middle; font: 18px "DejaVu Sans Mono", monospace; }
.fab rect { fill: none; stroke: #858a94; }
.fab .hatched { fill: url(#hatch); stroke: #aab0b8; }
.ref2 { font-size: 14px; }
.court { fill: none; stroke: #a116a4; stroke-width: 1; }
.silk { fill: none; stroke: #c4c184; stroke-width: 2; }
.silk text { fill: #f0ec9e; text-anchor: middle; stroke: none; font-family: "DejaVu Sans Mono", monospace; white-space: pre; }
.silk .ref text { font-size: 18px; stroke: #f0ec9e; stroke-width: 1; }
.silk .tiny text { font-size: 9px; font-weight: 700; }
.rats { stroke: #0c7079; stroke-width: 1; opacity: .6; }
.holes { fill: #04151f; stroke: #c9b94b; stroke-width: 1; }
.nets { fill: #f5b0b4; text-anchor: middle; font: 10px "DejaVu Sans Mono", monospace; }
.s4 { font-size: 4px; }
.s6 { font-size: 6px; }
.s8 { font-size: 8px; }
.s12 { font-size: 13px; }
.anchors { stroke: #dc18d8; stroke-width: 1; }
.edge { fill: none; stroke: #d0d2cd; stroke-width: 24; stroke-linecap: round; stroke-linejoin: round; }
.cursor { stroke: #59636e; stroke-width: 1; }
.panel { width: 279px; flex: none; display: flex; flex-direction: column; font-size: 16px; }
h2 { margin: 0; height: 23px; padding-left: 5px; background: #1f1f1f; font-size: 15px; font-weight: 400; line-height: 22px; flex: none; }
.box { display: flex; flex-direction: column; margin-top: 30px; border: 1px solid #4a4a4a; border-radius: 6px; background: #3a3a3a; flex: none; }
.tabs { display: flex; width: 194px; height: 29px; margin: -14px 0 0 43px; background: #3a3a3a; border: 1px solid #4e4e4e; border-radius: 7px; }
.tabs button { flex: 1 1 auto; padding: 0 14px; font-size: 11px; line-height: 16px; font-weight: 600; border-radius: 6px; }
.tabs .sel { background: #6c6c6c; }
ul { margin: 8px 3px 0; padding: 0 0 60px; list-style: none; }
li { display: flex; align-items: center; height: 24px; padding-left: 7px; }
.mark { width: 8px; height: 12px; margin-right: 6px; }
.cur { background: #484848; }
.cur .mark { background: #4747ff; clip-path: polygon(0 0, 100% 50%, 0 100%); }
.swatch { width: 22px; height: 16px; margin-right: 8px; background: var(--c); }
.check { background: repeating-conic-gradient(var(--c) 0 25%, var(--d) 0 50%) 4px 0 / 16px 16px; }
.eye { width: 20px; height: 20px; margin-right: 8px; }
.more-opts { display: flex; align-items: center; height: 34px; padding-left: 19px; gap: 3px; background: #363636; border-radius: 0 0 6px 6px; }
.more-opts i { width: 7px; height: 12px; background: #fff; clip-path: polygon(0 0, 100% 50%, 0 100%); }
.combos { display: flex; flex-direction: column; padding: 4px 9px 0 10px; height: 125px; flex: none; font-size: 15px; }
.combos label { height: 22px; line-height: 22px; }
.wide { margin-bottom: 6px; }
.wide::after { content: ""; position: absolute; left: 10px; right: 28px; top: 15px; height: 1px; background: #999; }
.filters { display: grid; grid-template-columns: 133px 1fr; padding: 7px 0 0 7px; }
.filters label { display: flex; align-items: center; gap: 8px; height: 21px; white-space: nowrap; }
.filters input { appearance: none; width: 19px; height: 19px; border-radius: 4px; background: #5c5c5c; flex: none; }
.filters input:checked { background: #1863dc url("data:image/svg+xml,%3Csvg xmlns='http://www.w3.org/2000/svg' viewBox='0 0 19 19'%3E%3Cpath d='M4 10l4 5 7-11' fill='none' stroke='white' stroke-width='2.4'/%3E%3C/svg%3E"); }
.stats { display: flex; gap: 33px; height: 36px; margin: 0; padding: 1px 0 0 14px; font-size: 14px; line-height: 18px; flex: none; }
.stats div { min-width: 42px; }
.stats div:nth-child(2) { min-width: 38px; }
.stats div:nth-child(3) { min-width: 119px; }
.stats dd { margin: 0; }
.status { display: grid; grid-template-columns: 581px 96px 209px 335px 241px 74px 1fr; align-items: center; height: 37px; padding-left: 7px; border-top: 1px solid #0a0a0a; color: #a5a5a5; white-space: nowrap; flex: none; }
</style>
